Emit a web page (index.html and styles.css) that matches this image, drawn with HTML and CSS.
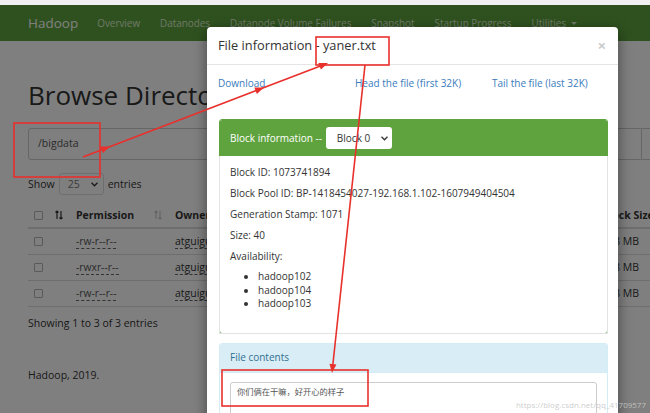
FILE: index.html
```html
<!DOCTYPE html>
<html lang="en">
<head>
<meta charset="utf-8">
<title>Browsing HDFS</title>
<link rel="stylesheet" href="styles.css">
</head>
<body>
<div class="chrome"></div>
<nav class="navbar">
  <span class="brand">Hadoop</span>
  <ul class="nav">
    <li>Overview</li>
    <li>Datanodes</li>
    <li>Datanode Volume Failures</li>
    <li>Snapshot</li>
    <li>Startup Progress</li>
    <li>Utilities <span class="caret"></span></li>
  </ul>
</nav>
<main class="page">
  <h1>Browse Directory</h1>
  <div class="pathbar">
    <div class="path-input">/bigdata</div>
    <div class="path-btn"></div>
  </div>
  <div class="length">Show <span class="len-select">25 <svg class="chev" width="7" height="5" viewBox="0 0 7 5"><polyline points="0.5,0.8 3.5,3.8 6.5,0.8" fill="none" stroke="#333" stroke-width="1.3"/></svg></span> entries</div>
  <div class="table">
    <div class="tr th">
      <div class="cell"><span class="cbox"></span><svg class="sort" width="8" height="10" viewBox="0 0 8 10"><path d="M2 9V1M0.5 2.5L2 1L3.5 2.5M6 1v8M4.5 7.5L6 9L7.5 7.5" fill="none" stroke="#333" stroke-width="1.2"/></svg></div>
      <div class="cell">Permission<svg class="sort" width="8" height="10" viewBox="0 0 8 10"><path d="M2 9V1M0.5 2.5L2 1L3.5 2.5M6 1v8M4.5 7.5L6 9L7.5 7.5" fill="none" stroke="#c8c8c8" stroke-width="1.2"/></svg></div>
      <div class="cell">Owner</div>
      <div class="cell">Block Size</div>
    </div>
    <div class="tr">
      <div class="cell"><span class="cbox"></span></div>
      <div class="cell"><span class="perm">-rw-r--r--</span></div>
      <div class="cell"><span class="perm owner">atguigu</span></div>
      <div class="cell">128 MB</div>
    </div>
    <div class="tr">
      <div class="cell"><span class="cbox"></span></div>
      <div class="cell"><span class="perm">-rwxr--r--</span></div>
      <div class="cell"><span class="perm owner">atguigu</span></div>
      <div class="cell">128 MB</div>
    </div>
    <div class="tr">
      <div class="cell"><span class="cbox"></span></div>
      <div class="cell"><span class="perm">-rw-r--r--</span></div>
      <div class="cell"><span class="perm owner">atguigu</span></div>
      <div class="cell">128 MB</div>
    </div>
  </div>
  <div class="info">Showing 1 to 3 of 3 entries</div>
  <footer class="footer">Hadoop, 2019.</footer>
</main>

<div class="backdrop"></div>

<section class="modal">
  <header class="modal-header">
    <h4 class="modal-title">File information - yaner.txt</h4>
    <span class="close">&times;</span>
  </header>
  <div class="modal-body">
    <div class="links">
      <a>Download</a>
      <a>Head the file (first 32K)</a>
      <a>Tail the file (last 32K)</a>
    </div>
    <div class="panel panel-success">
      <div class="panel-heading">
        <span>Block information --</span>
        <span class="block-select">Block 0 <svg class="chev" width="7" height="5" viewBox="0 0 7 5"><polyline points="0.5,0.8 3.5,3.8 6.5,0.8" fill="none" stroke="#333" stroke-width="1.3"/></svg></span>
      </div>
      <div class="panel-body">
        <p>Block ID: 1073741894</p>
        <p>Block Pool ID: BP-1418454027-192.168.1.102-1607949404504</p>
        <p>Generation Stamp: 1071</p>
        <p>Size: 40</p>
        <p>Availability:</p>
        <ul>
          <li>hadoop102</li>
          <li>hadoop104</li>
          <li>hadoop103</li>
        </ul>
      </div>
    </div>
    <div class="panel panel-info">
      <div class="panel-heading info-heading">File contents</div>
      <div class="panel-body contents-body">
        <div class="textarea">你们俩在干嘛，好开心的样子</div>
      </div>
    </div>
  </div>
</section>

<svg class="annot" width="650" height="413" viewBox="0 0 650 413">
  <g fill="none" stroke="#e8302c" stroke-width="1.6">
    <rect x="14" y="123" width="86" height="54"/>
    <rect x="316" y="37" width="73" height="28"/>
    <rect x="222" y="370" width="146" height="36"/>
    <line x1="83" y1="157" x2="325" y2="64.2"/>
    <line x1="365" y1="65" x2="332.5" y2="368"/>
  </g>
  <g fill="#e8302c">
    <polygon points="328,63 320.9,69.5 318.3,62.9"/>
    <polygon points="264,87.6 256.9,94.1 254.3,87.5"/>
    <polygon points="110,146.6 102.9,153.1 100.3,146.5"/>
    <polygon points="332,373 336.4,364.4 329.5,363.7"/>
  </g>
</svg>
<div class="watermark">https://blog.csdn.net/qq_41709577</div>
</body>
</html>
```

FILE: styles.css
```css
* { box-sizing: border-box; }

html, body {
  margin: 0;
  padding: 0;
}

body {
  position: relative;
  width: 650px;
  height: 413px;
  overflow: hidden;
  background: #ffffff;
  color: #333333;
  font-family: "Open Sans", "Noto Sans", "Noto Sans CJK SC", sans-serif;
  font-size: 10.5px;
  line-height: 15px;
}

.chrome {
  height: 5px;
  background: #f1f1f1;
}

/* navbar */
.navbar {
  height: 36px;
  background: #5fa33e;
  display: flex;
  align-items: center;
  padding-left: 28px;
}

.brand {
  font-size: 13.5px;
  color: #ffffff;
  margin-right: 19px;
}

.nav {
  display: flex;
  gap: 20px;
  list-style: none;
  margin: 0;
  padding: 0;
  color: #dcefcf;
  font-size: 9.9px;
}

.caret {
  display: inline-block;
  width: 0;
  height: 0;
  margin-left: 2px;
  vertical-align: middle;
  border-top: 3px solid #dcefcf;
  border-left: 3px solid transparent;
  border-right: 3px solid transparent;
}

/* page */
.page {
  padding-left: 28px;
}

h1 {
  margin: 39px 0 0;
  font-size: 26px;
  line-height: 30px;
  font-weight: 400;
  color: #333;
  white-space: nowrap;
}

.pathbar {
  display: flex;
  width: 680px;
  margin-top: 18px;
  height: 32px;
}

.path-input {
  width: 614px;
  border: 1px solid #cccccc;
  border-radius: 3px 0 0 3px;
  padding: 7px 9px;
  color: #555;
  font-size: 10.5px;
}

.path-btn {
  flex: 1;
  border: 1px solid #cccccc;
  border-left: none;
}

.length {
  margin-top: 13px;
  display: flex;
  align-items: center;
  height: 22px;
}

.len-select {
  display: inline-flex;
  align-items: center;
  justify-content: space-between;
  width: 45px;
  height: 22px;
  margin: 0 4px 0 4px;
  padding: 0 5px 0 8px;
  border: 1px solid #dddddd;
  border-radius: 3px;
  color: #777;
}

/* table */
.table {
  margin-top: 8px;
  width: 656px;
}

.tr {
  display: grid;
  grid-template-columns: 40px 99px 427px 90px;
  height: 26px;
  border-bottom: 1px solid #dddddd;
  align-items: center;
}

.tr.th {
  border-bottom: 2px solid #dddddd;
  font-weight: 700;
}

.cell {
  padding: 0 5px 0 8px;
  display: flex;
  align-items: center;
  justify-content: space-between;
  white-space: nowrap;
}

.cell:first-child {
  padding-left: 6px;
}

.cbox {
  display: inline-block;
  width: 9px;
  height: 9px;
  border: 1px solid #b5b5b5;
  border-radius: 1px;
  background: #fff;
}

.perm {
  font-size: 10.3px;
  line-height: 13px;
  color: #555;
  border-bottom: 1px dashed #666;
}

.perm.owner {
  font-size: 10.5px;
  color: #333;
}

.info {
  margin-top: 9px;
}

.footer {
  margin-top: 37px;
}

/* overlay */
.backdrop {
  position: absolute;
  left: 0;
  top: 5px;
  right: 0;
  bottom: 0;
  background: rgba(0, 0, 0, 0.5);
}

.modal {
  position: absolute;
  left: 207px;
  top: 27px;
  width: 411px;
  height: 420px;
  background: #ffffff;
  border-radius: 4px;
  box-shadow: 0 4px 14px rgba(0, 0, 0, 0.45);
  font-size: 10px;
}

.modal-header {
  height: 38px;
  display: flex;
  align-items: center;
  justify-content: space-between;
  padding: 0 11px;
  border-bottom: 1px solid #e5e5e5;
}

.modal-title {
  margin: 0;
  font-size: 12.8px;
  font-weight: 400;
  line-height: 19px;
  color: #333;
}

.close {
  font-size: 15px;
  font-weight: 700;
  color: #cccccc;
  margin-right: 1px;
}

.modal-body {
  padding: 11px 10px 0 11px;
}

.links {
  display: grid;
  grid-template-columns: 137px 137px auto;
}

.links a {
  color: #3a7cbd;
}

.panel {
  border: 1px solid #dddddd;
  border-radius: 3px;
  margin-left: 1px;
}

.panel-success {
  margin-top: 28px;
  border-color: #5fa33e;
}

.panel-heading {
  height: 36px;
  background: #5fa33e;
  color: #ffffff;
  display: flex;
  align-items: center;
  padding: 0 10px;
  border-radius: 2px 2px 0 0;
}

.block-select {
  display: inline-flex;
  align-items: center;
  justify-content: space-between;
  margin-left: 4px;
  width: 66px;
  height: 22px;
  padding: 0 4px 0 11px;
  background: #ffffff;
  border-radius: 3px;
  color: #333;
}

.panel-body {
  padding: 9px 10px 9px;
  border-top: 1px solid #e8e8e8;
}

.panel-success .panel-body {
  border: 1px solid #e3e3e3;
  border-top: none;
  margin: 0 -1px -1px;
}

.panel-body p {
  margin: 0 0 6px;
  line-height: 15px;
}

.panel-body ul {
  margin: 2px 0 13px;
  padding-left: 28px;
}

.panel-body li {
  line-height: 13.5px;
}

.panel-info {
  margin-top: 9px;
  border-color: #d4ecf4;
}

.info-heading {
  height: 29px;
  background: #d9edf7;
  color: #31708f;
  border-bottom: 1px solid #d4ecf4;
}

.contents-body {
  border-top: none;
  padding: 9px 10px;
}

.textarea {
  height: 60px;
  border: 1px solid #cccccc;
  border-radius: 3px;
  padding: 3px 6px;
  font-size: 8.25px;
  line-height: 12px;
  color: #555;
}

/* annotation layer */
.annot {
  position: absolute;
  left: 0;
  top: 0;
}

.watermark {
  position: absolute;
  right: 4px;
  bottom: 3px;
  font-size: 8px;
  line-height: 10px;
  color: rgba(200, 200, 200, 0.9);
}
```
